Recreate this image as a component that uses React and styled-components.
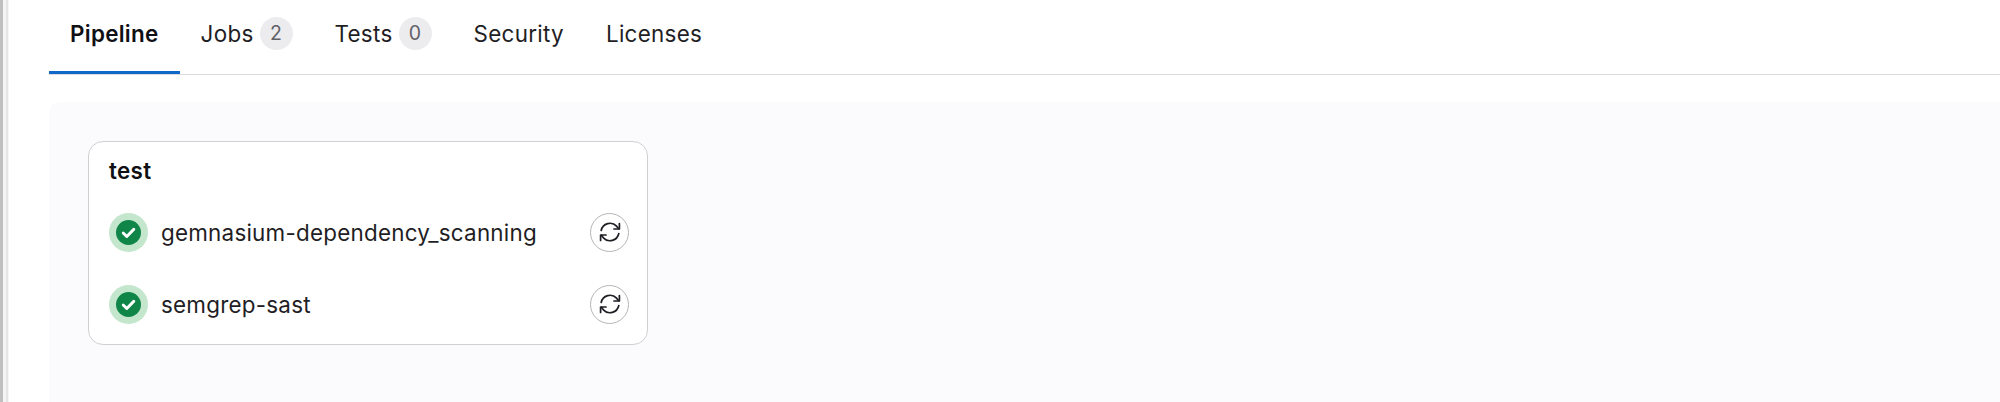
import styled, { createGlobalStyle } from "styled-components";

const GlobalStyle = createGlobalStyle`
  html, body {
    margin: 0;
    padding: 0;
    background: #fff;
    overflow: hidden;
  }
  body {
    font-family: "Inter", "Liberation Sans", sans-serif;
    color: #1f1e24;
  }
`;

const Page = styled.div`
  display: flex;
  width: 2000px;
  height: 402px;
  overflow: hidden;
`;

const Edge = styled.div`
  flex: none;
  width: 9px;
  background: linear-gradient(
    to right,
    #bfbfbf 0 3px,
    #f4f4f4 3px 6px,
    #e6e6e6 6px 8px,
    #f6f6f6 8px 9px
  );
`;

const Main = styled.main`
  flex: 1;
  min-width: 0;
  padding-left: 40px;
`;

const TabBar = styled.nav`
  display: flex;
  height: 74px;
  border-bottom: 1px solid #dcdcde;
`;

const Tab = styled.a`
  display: flex;
  align-items: center;
  gap: 6px;
  height: 74px;
  box-sizing: border-box;
  padding: 0 21px 8px;
  font-size: 22.4px;
  letter-spacing: 0.3px;
  font-weight: ${(props) => (props.$active ? 600 : 400)};
  color: ${(props) => (props.$active ? "#101014" : "#1f1e24")};
  box-shadow: ${(props) => (props.$active ? "inset 0 -3px 0 #1068c8" : "none")};
`;

const Count = styled.span`
  display: flex;
  align-items: center;
  justify-content: center;
  width: 33px;
  height: 33px;
  border-radius: 50%;
  background: #ececef;
  color: #626168;
  font-size: 19.5px;
`;

const Panel = styled.section`
  margin-top: 27px;
  height: 400px;
  padding: 39px;
  background: #fbfafd;
  border-radius: 10px 0 0 0;
`;

const Stage = styled.div`
  box-sizing: border-box;
  width: 560px;
  height: 204px;
  padding: 16px 18px 0 20px;
  background: #fff;
  border: 1px solid #d0d0d2;
  border-radius: 15px;
`;

const StageTitle = styled.h3`
  margin: 0 0 12px;
  font-size: 22.4px;
  line-height: 26px;
  letter-spacing: 0.3px;
  font-weight: 600;
  color: #101014;
`;

const JobRow = styled.div`
  display: flex;
  align-items: center;
  height: 72px;
`;

const JobName = styled.span`
  flex: 1;
  margin-left: 13px;
  font-size: 22.4px;
  letter-spacing: 0.24px;
  color: #1f1e24;
`;

const StatusRing = styled.span`
  display: flex;
  align-items: center;
  justify-content: center;
  width: 39px;
  height: 39px;
  border-radius: 50%;
  background: #c3e6cd;
`;

const RetryButton = styled.button`
  display: flex;
  align-items: center;
  justify-content: center;
  width: 39px;
  height: 39px;
  padding: 0;
  background: #fff;
  border: 1px solid #b5b5b8;
  border-radius: 50%;
`;

const SuccessIcon = () => (
  <svg width="25" height="25" viewBox="0 0 25 25">
    <circle cx="12.5" cy="12.5" r="12.5" fill="#108548" />
    <path d="M7.2 13l3.6 3.5 7-7.2" fill="none" stroke="#fff" strokeWidth="3" strokeLinecap="round" strokeLinejoin="round" />
  </svg>
);

const RetryIcon = () => (
  <svg width="22" height="22" viewBox="0 0 22 22" fill="none" stroke="#1f1e24" strokeWidth="1.7" strokeLinecap="round" strokeLinejoin="round">
    <path d="M2.2 9.5A9 9 0 0 1 17.6 5.2L19.6 7.6" />
    <path d="M20.4 2.6v5.4h-5.4" />
    <path d="M19.8 12.5A9 9 0 0 1 4.4 16.8L2.4 14.4" />
    <path d="M1.6 19.4v-5.4h5.4" />
  </svg>
);

const tabs = [
  { name: "Pipeline", active: true },
  { name: "Jobs", count: 2 },
  { name: "Tests", count: 0 },
  { name: "Security" },
  { name: "Licenses" },
];

const jobs = ["gemnasium-dependency_scanning", "semgrep-sast"];

export default function App() {
  return (
    <>
      <GlobalStyle />
      <Page>
        <Edge />
        <Main>
          <TabBar>
            {tabs.map((tab) => (
              <Tab key={tab.name} $active={tab.active}>
                {tab.name}
                {tab.count !== undefined && <Count>{tab.count}</Count>}
              </Tab>
            ))}
          </TabBar>
          <Panel>
            <Stage>
              <StageTitle>test</StageTitle>
              {jobs.map((job) => (
                <JobRow key={job}>
                  <StatusRing>
                    <SuccessIcon />
                  </StatusRing>
                  <JobName>{job}</JobName>
                  <RetryButton>
                    <RetryIcon />
                  </RetryButton>
                </JobRow>
              ))}
            </Stage>
          </Panel>
        </Main>
      </Page>
    </>
  );
}
